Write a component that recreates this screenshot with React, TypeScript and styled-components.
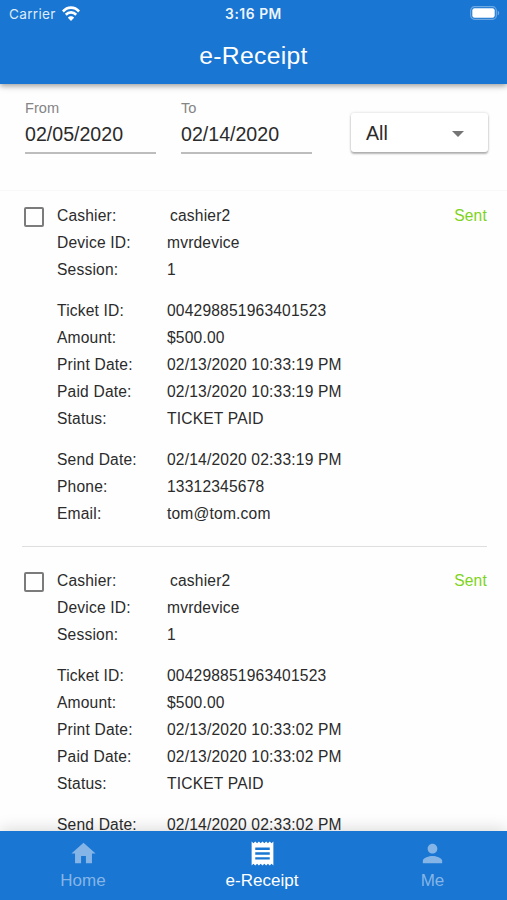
import React from "react";
import styled, { createGlobalStyle } from "styled-components";

const GlobalStyle = createGlobalStyle`
  * { box-sizing: border-box; }
  body {
    margin: 0;
    background: #fefefe;
    color: #2b2b2b;
    font-family: "Liberation Sans", Arial, sans-serif;
  }
`;

const Screen = styled.div`
  width: 507px;
  height: 900px;
  display: flex;
  flex-direction: column;
  overflow: hidden;
`;

const Header = styled.header`
  flex: 0 0 84px;
  background: #1976d2;
  color: #fff;
  box-shadow: 0 2px 5px rgba(0, 0, 0, 0.32), 0 4px 8px rgba(0, 0, 0, 0.06);
  z-index: 1;
`;

const StatusBar = styled.div`
  display: grid;
  grid-template-columns: 1fr auto 1fr;
  align-items: center;
  height: 28px;
  padding: 0 7px 0 9px;
  font: 400 13.6px/28px Inter, sans-serif;
`;

const Carrier = styled.div`
  display: flex;
  align-items: center;
  gap: 6px;
  letter-spacing: 0.3px;
  color: #deebf9;
`;

const Clock = styled.div`
  padding-right: 2px;
  font-size: 13.8px;
  font-weight: 600;
  letter-spacing: 0.55px;
  color: #eef5fc;
`;

const BatteryIcon = styled.svg`
  justify-self: end;
  margin-bottom: 2px;
`;

const WifiIcon = styled.svg`
  margin-bottom: 2px;
`;

const Title = styled.h1`
  margin: 0;
  text-align: center;
  font-size: 24.7px;
  font-weight: 400;
  line-height: 55px;
  letter-spacing: 0.32px;
`;

const Filters = styled.section`
  flex: 0 0 107px;
  display: flex;
  align-items: flex-start;
  padding: 15px 19px 0 25px;
  border-bottom: 1px solid #f8f8f8;
`;

const DateField = styled.label`
  width: 131px;
  margin-right: 25px;
  height: 55px;
  display: flex;
  flex-direction: column;
  border-bottom: 2px solid #bdbdbd;
`;

const FieldLabel = styled.span`
  font-size: 14.6px;
  line-height: 18px;
  color: #858585;
`;

const FieldValue = styled.span`
  font-size: 19.6px;
  line-height: 34px;
`;

const Select = styled.button`
  display: flex;
  align-items: center;
  justify-content: space-between;
  width: 137px;
  height: 39px;
  margin: 14px 0 0 14px;
  padding: 2px 24px 0 15px;
  border: 0;
  border-radius: 3px;
  background: #fff;
  color: inherit;
  font: 400 19.6px/37px "Liberation Sans", Arial, sans-serif;
  box-shadow: 0 2px 2px rgba(0, 0, 0, 0.27), 0 0 3px rgba(0, 0, 0, 0.18);
`;

const List = styled.main`
  flex: 1 1 0;
  min-height: 0;
  overflow: hidden;
  padding: 0 20px 0 22px;
`;

const Receipt = styled.article`
  display: grid;
  grid-template-columns: 35px 1fr auto;
  align-items: start;
  height: 356px;
  padding-top: 12px;
  border-bottom: 1px solid #dedede;

  & + & {
    height: 365px;
    padding-top: 21px;
  }
`;

const Checkbox = styled.span`
  width: 20px;
  height: 20px;
  margin: 4px 0 0 2px;
  border: 2px solid #7b7b7b;
  border-radius: 2px;
`;

const Group = styled.dl`
  display: grid;
  grid-template-columns: 110px 1fr;
  grid-auto-rows: 26.85px;
  margin: 0 0 14.7px;
  font-size: 15.6px;
  line-height: 26.85px;
  letter-spacing: 0.18px;
`;

const Term = styled.dt`
  white-space: nowrap;
`;

const Detail = styled.dd<{ $inset?: boolean }>`
  margin: 0;
  padding-left: ${(p) => (p.$inset ? 3 : 0)}px;
  white-space: nowrap;
`;

const Sent = styled.span`
  color: #7ed321;
  font-size: 15.6px;
  line-height: 26.85px;
  letter-spacing: 0.18px;
`;

const BottomNav = styled.nav`
  flex: 0 0 69px;
  display: grid;
  grid-template-columns: 166px 192px 149px;
  background: #1976d2;
  box-shadow: 0 -3px 14px rgba(0, 0, 0, 0.13);
  z-index: 1;
`;

const Tab = styled.a<{ $active?: boolean }>`
  display: flex;
  flex-direction: column;
  align-items: center;
  gap: 1.5px;
  padding-top: 7.5px;
  color: ${(p) => (p.$active ? "#fff" : "#85b5e7")};
  font-size: 17px;
  line-height: 24px;
`;

type Row = [label: string, value: string];

const sale = (time: string): Row[][] => [
  [["Cashier:", "cashier2"], ["Device ID:", "mvrdevice"], ["Session:", "1"]],
  [
    ["Ticket ID:", "004298851963401523"],
    ["Amount:", "$500.00"],
    ["Print Date:", `02/13/2020 10:33:${time} PM`],
    ["Paid Date:", `02/13/2020 10:33:${time} PM`],
    ["Status:", "TICKET PAID"],
  ],
];

const receipts: Row[][][] = [
  [
    ...sale("19"),
    [
      ["Send Date:", "02/14/2020 02:33:19 PM"],
      ["Phone:", "13312345678"],
      ["Email:", "tom@tom.com"],
    ],
  ],
  [...sale("02"), [["Send Date:", "02/14/2020 02:33:02 PM"]]],
];

const tabs = [
  { label: "Home", path: "M10 20v-6h4v6h5v-8h3L12 3 2 12h3v8z" },
  {
    label: "e-Receipt",
    active: true,
    path: "M18 17H6v-2h12v2zm0-4H6v-2h12v2zm0-4H6V7h12v2zM3 22l1.5-1.5L6 22l1.5-1.5L9 22l1.5-1.5L12 22l1.5-1.5L15 22l1.5-1.5L18 22l1.5-1.5L21 22V2l-1.5 1.5L18 2l-1.5 1.5L15 2l-1.5 1.5L12 2l-1.5 1.5L9 2 7.5 3.5 6 2 4.5 3.5 3 2v20z",
  },
  {
    label: "Me",
    path: "M12 12c2.21 0 4-1.79 4-4s-1.79-4-4-4-4 1.79-4 4 1.79 4 4 4zm0 2c-2.67 0-8 1.34-8 4v2h16v-2c0-2.66-5.33-4-8-4z",
  },
];

export default function App() {
  return (
    <>
      <GlobalStyle />
      <Screen>
        <Header>
          <StatusBar>
            <Carrier>
              Carrier
              <WifiIcon width="18" height="15" viewBox="0 0 18 14" preserveAspectRatio="none" fill="none" stroke="#fff" strokeWidth="2.6">
                <path d="M0.9 5.1C5.4.2 12.6.2 17.1 5.1" />
                <path d="M3.8 8.2c2.9-2.9 7.5-2.9 10.4 0" />
                <path d="M9 14 5.9 10.9c1.7-1.7 4.5-1.7 6.2 0z" fill="#fff" stroke="none" />
              </WifiIcon>
            </Carrier>
            <Clock>3:16 PM</Clock>
            <BatteryIcon width="30" height="14" viewBox="0 0 30 14">
              <rect x="0.7" y="0.7" width="25.6" height="12.6" rx="3.8" fill="none" stroke="#6ea8e2" strokeWidth="1.2" />
              <rect x="2.3" y="2.3" width="22.4" height="9.4" rx="2.2" fill="#fff" />
              <path d="M27.7 4.7c2 .7 2 3.9 0 4.6z" fill="#6ea8e2" />
            </BatteryIcon>
          </StatusBar>
          <Title>e-Receipt</Title>
        </Header>
        <Filters>
          <DateField>
            <FieldLabel>From</FieldLabel>
            <FieldValue>02/05/2020</FieldValue>
          </DateField>
          <DateField>
            <FieldLabel>To</FieldLabel>
            <FieldValue>02/14/2020</FieldValue>
          </DateField>
          <Select>
            All
            <svg width="12" height="6" viewBox="0 0 12 6">
              <path d="M0 0h12L6 6z" fill="#757575" />
            </svg>
          </Select>
        </Filters>
        <List>
          {receipts.map((groups, i) => (
            <Receipt key={i}>
              <Checkbox role="checkbox" aria-checked={false} />
              <div>
                {groups.map((rows, g) => (
                  <Group key={g}>
                    {rows.map(([label, value]) => (
                      <React.Fragment key={label}>
                        <Term>{label}</Term>
                        <Detail $inset={label === "Cashier:"}>{value}</Detail>
                      </React.Fragment>
                    ))}
                  </Group>
                ))}
              </div>
              <Sent>Sent</Sent>
            </Receipt>
          ))}
        </List>
        <BottomNav>
          {tabs.map((tab) => (
            <Tab key={tab.label} $active={tab.active}>
              <svg width="29" height="29" viewBox="0 0 24 24" fill="currentColor">
                <path d={tab.path} />
              </svg>
              {tab.label}
            </Tab>
          ))}
        </BottomNav>
      </Screen>
    </>
  );
}
